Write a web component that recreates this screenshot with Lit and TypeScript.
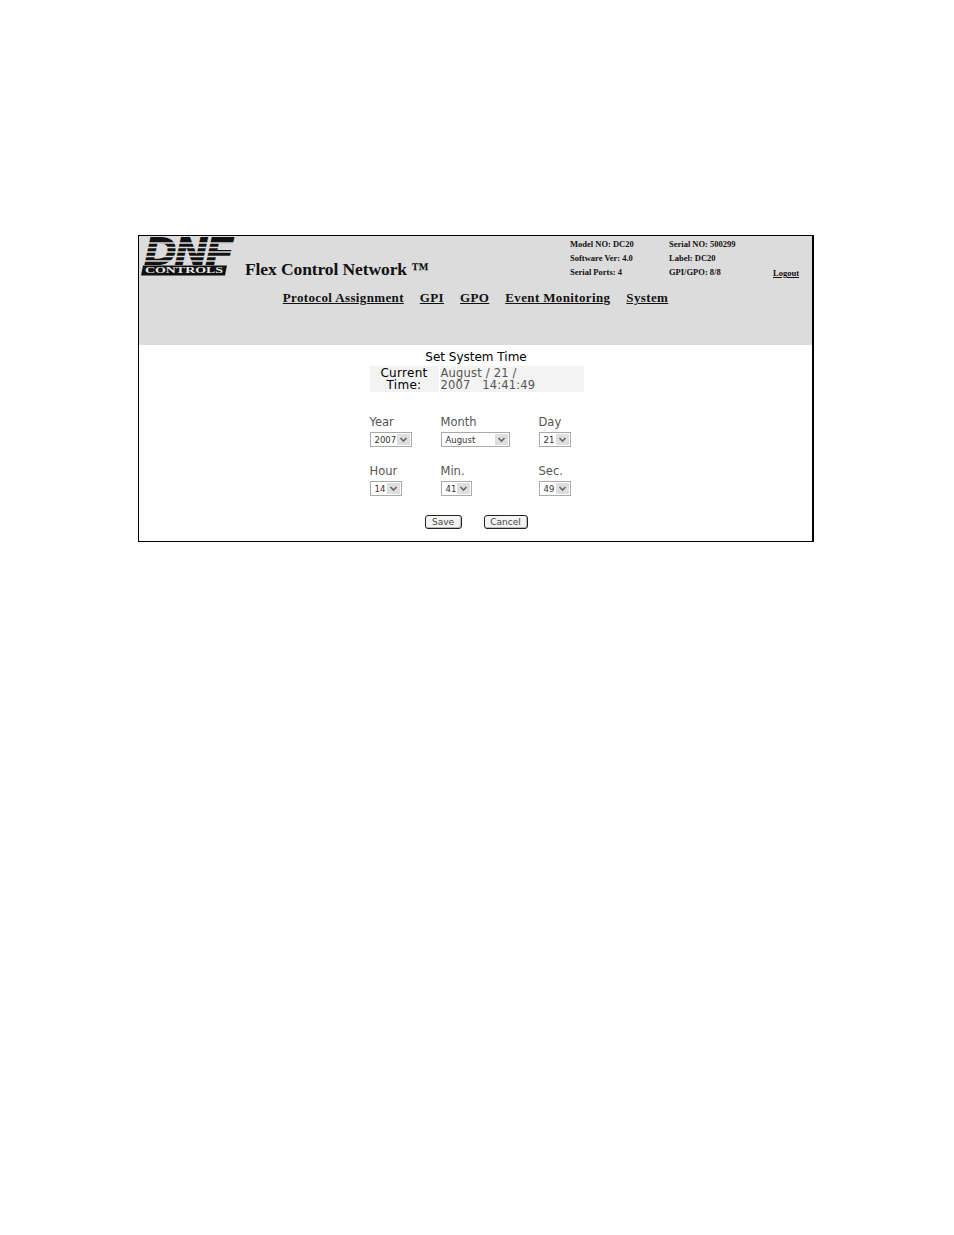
import { LitElement, html, css } from "lit";
import { customElement } from "lit/decorators.js";

const chevron = html`<svg class="chev" viewBox="0 0 9 9" width="9" height="9"><path d="M1.5 3 L4.5 6 L7.5 3" fill="none" stroke="#666" stroke-width="1.6"/></svg>`;

@customElement("app-root")
export class AppRoot extends LitElement {
  static styles = css`
    :host { display: block; width: 954px; height: 1235px; background: #fff; overflow: hidden; padding: 235px 0 0 138px; box-sizing: border-box; }
    .frame { width: 676px; height: 307px; box-sizing: border-box; border: 1.5px solid #000; border-right-width: 2px; display: flex; flex-direction: column; }
    .head { height: 109px; background: #dcdcdc; display: flex; flex-direction: column; font-family: "Liberation Serif", serif; color: #111; flex: none; }
    .top { display: flex; height: 52px; }
    .logo { width: 95px; height: 42px; margin: 1px 0 0 2px; flex: none; overflow: visible; }
    .title { margin: 23px 0 0 9px; width: 325px; flex: none; font-size: 17.5px; font-weight: bold; line-height: 20px; letter-spacing: -0.1px; white-space: nowrap; }
    .info { width: 240px; display: grid; grid-template-columns: 99px 104px 30px; grid-auto-rows: 14px; font-size: 8.5px; font-weight: bold; line-height: 14px; padding-top: 1px; white-space: nowrap; }
    .logout { text-decoration: underline; padding-top: 1px; }
    nav { display: flex; justify-content: center; gap: 16px; font-size: 13px; font-weight: bold; line-height: 16px; margin-top: 2px; letter-spacing: 0.36px; }
    nav span { text-decoration: underline; white-space: nowrap; }
    .body { flex: 1; font-family: "DejaVu Sans", sans-serif; color: #333; display: flex; flex-direction: column; align-items: center; }
    .form { width: 214px; display: flex; flex-direction: column; margin-left: 2px; }
    h1 { margin: 5px 0 2px -1px; font-size: 12px; font-weight: normal; line-height: 14px; color: #000; text-align: center; }
    .current { display: grid; grid-template-columns: 69px 1fr; gap: 1px; font-size: 11.5px; line-height: 12px; height: 26px; }
    .current > div { background: #f3f3f3; padding-top: 1px; }
    .cap { text-align: center; color: #000; font-size: 12px; letter-spacing: 0.3px; }
    .val { padding-left: 1px; color: #555; letter-spacing: 0.2px; }
    .grid { display: grid; grid-template-columns: 71px 98px 45px; margin-top: 23px; row-gap: 17px; }
    .field label { display: block; font-size: 11.5px; line-height: 14px; color: #555; height: 17px; }
    .sel { box-sizing: border-box; height: 15px; border: 1px solid #aaa; display: flex; align-items: center; justify-content: space-between; font-size: 8.5px; color: #333; padding: 0 1px 0 4px; background: #fff; }
    .btnbox { width: 13px; height: 11px; background: #dedede; display: flex; align-items: center; justify-content: center; }
    .chev { display: block; }
    .w42 { width: 42px; } .w69 { width: 69px; } .w32 { width: 32px; } .w31 { width: 31px; }
    .actions { display: flex; justify-content: center; gap: 22px; margin: 19px 0 0 -1px; }
    .b { box-sizing: border-box; height: 14px; border: 1px solid #222; border-radius: 3px; font-size: 9px; line-height: 12px; text-align: center; color: #444; background: #f4f4f4; box-shadow: inset -1px -1px 0 #bbb; }
    .save { width: 37px; } .cancel { width: 44px; }
  `;

  sel(v: string, cls: string) {
    return html`<div class="sel ${cls}"><span>${v}</span><span class="btnbox">${chevron}</span></div>`;
  }

  render() {
    return html`<div class="frame">
      <div class="head">
        <div class="top">
          <svg class="logo" viewBox="0 0 95 42">
            <text x="4" y="27" font-family="Liberation Sans, sans-serif" font-weight="bold" font-style="italic" font-size="37" textLength="87" lengthAdjust="spacingAndGlyphs" fill="#111" stroke="#111" stroke-width="2">DNF</text>
            <g stroke="#dcdcdc" stroke-width="1.3">
              <line x1="0" x2="95" y1="6" y2="6"/>
              <line x1="0" x2="95" y1="10.5" y2="10.5"/>
              <line x1="0" x2="95" y1="15" y2="15"/>
              <line x1="0" x2="95" y1="19.5" y2="19.5"/>
              <line x1="0" x2="95" y1="24" y2="24"/>
            </g>
            <path d="M2 28.5 H86 L84 38.5 H0 Z" fill="#111"/>
            <text x="4" y="36.3" font-family="Liberation Serif, serif" font-weight="bold" font-size="8.5" textLength="78" lengthAdjust="spacingAndGlyphs" fill="#e8e8e8">CONTROLS</text>
          </svg>
          <div class="title">Flex Control Network ™</div>
          <div class="info">
            <span>Model NO: DC20</span><span>Serial NO: 500299</span><span></span>
            <span>Software Ver: 4.0</span><span>Label: DC20</span><span></span>
            <span>Serial Ports: 4</span><span>GPI/GPO: 8/8</span><span class="logout">Logout</span>
          </div>
        </div>
        <nav>
          <span>Protocol Assignment</span><span>GPI</span><span>GPO</span><span>Event Monitoring</span><span>System</span>
        </nav>
      </div>
      <div class="body">
        <div class="form">
          <h1>Set System Time</h1>
          <div class="current">
            <div class="cap">Current<br />Time:</div>
            <div class="val">August / 21 /<br />2007 &nbsp; 14:41:49</div>
          </div>
          <div class="grid">
            <div class="field"><label>Year</label>${this.sel("2007", "w42")}</div>
            <div class="field"><label>Month</label>${this.sel("August", "w69")}</div>
            <div class="field"><label>Day</label>${this.sel("21", "w32")}</div>
            <div class="field"><label>Hour</label>${this.sel("14", "w32")}</div>
            <div class="field"><label>Min.</label>${this.sel("41", "w31")}</div>
            <div class="field"><label>Sec.</label>${this.sel("49", "w32")}</div>
          </div>
          <div class="actions">
            <div class="b save">Save</div>
            <div class="b cancel">Cancel</div>
          </div>
        </div>
      </div>
    </div>`;
  }
}
